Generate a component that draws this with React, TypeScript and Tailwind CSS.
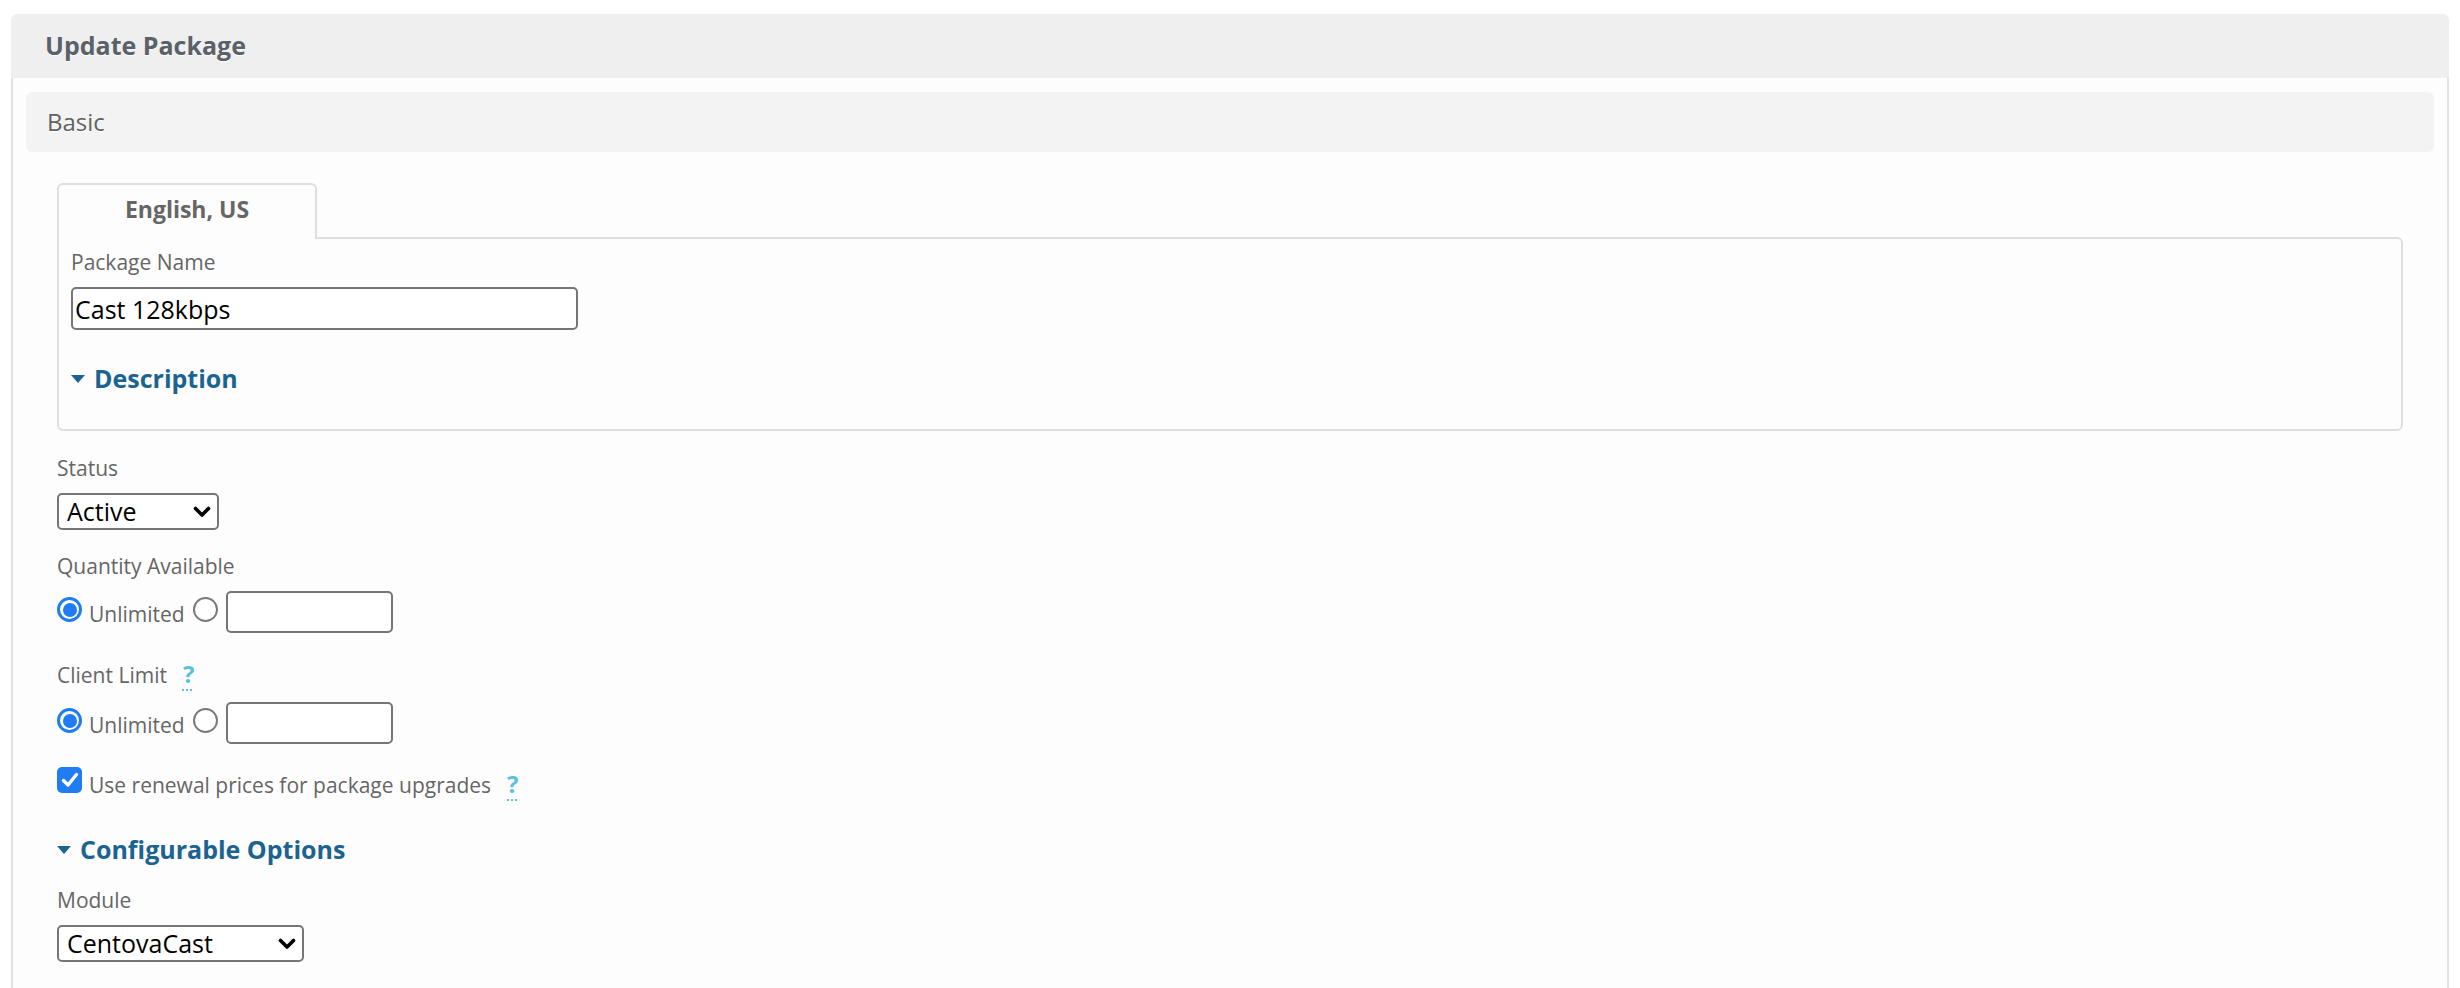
import React from 'react';

// Chevron used by the native-looking selects
function Chevron() {
  return (
    <svg width="18" height="12" viewBox="0 0 18 12" className="pointer-events-none absolute right-[8px] top-1/2 -translate-y-1/2">
      <polyline points="2.5,2.5 9,9 15.5,2.5" fill="none" stroke="#000" strokeWidth="3.6" strokeLinecap="round" strokeLinejoin="round" />
    </svg>
  );
}

function Caret() {
  return (
    <svg width="14" height="8" viewBox="0 0 14 8" className="mt-[2px] shrink-0">
      <polygon points="0,0 14,0 7,8" fill="#1b6391" />
    </svg>
  );
}

function Select({ value, width }: { value: string; width: string }) {
  return (
    <div className={`relative ${width}`}>
      <select
        defaultValue={value}
        className="block h-[37px] w-full appearance-none rounded-[5px] border-2 border-[#767676] bg-white pl-[8px] pr-[30px] text-[25px] leading-none text-black outline-none"
      >
        <option>{value}</option>
      </select>
      <Chevron />
    </div>
  );
}

function Radio({ checked, className = '' }: { checked?: boolean; className?: string }) {
  if (checked) {
    return (
      <span className={`mt-[6px] flex h-[25px] w-[25px] shrink-0 rounded-full border-[3px] border-[#1f7cf3] bg-white p-[2.5px] ${className}`}>
        <span className="flex-1 rounded-full bg-[#1f7cf3]" />
      </span>
    );
  }
  return <span className={`mt-[6px] block h-[25px] w-[25px] shrink-0 rounded-full border-2 border-[#7a7a7a] bg-white ${className}`} />;
}

function Help() {
  return (
    <span className="text-[24px] font-bold text-[#5bc0de] underline decoration-dotted decoration-2 underline-offset-[6px]">?</span>
  );
}

function RadioRow() {
  return (
    <div className="flex items-start">
      <Radio checked />
      <span className="ml-[7px] mt-[8px] text-[21px] leading-[30px] text-[#666]">Unlimited</span>
      <Radio className="ml-[8px]" />
      <input type="text" className="ml-[8px] h-[42px] w-[167px] rounded-[5px] border-2 border-[#767676] bg-white outline-none" />
    </div>
  );
}

export default function App() {
  return (
    <div className="min-h-screen bg-white px-[11px] pt-[14px] font-['Open_Sans','Liberation_Sans',sans-serif]">
      <div className="overflow-hidden rounded-t-[6px]">
        {/* panel header */}
        <div className="flex h-[64px] items-center bg-[#efefef] px-[34px]">
          <h1 className="text-[25px] font-bold text-[#5b6169] [text-shadow:0_1px_0_#fff]">Update Package</h1>
        </div>

        <div className="border-x-2 border-[#e2e2e2] bg-[#fdfdfd] px-[13px] pb-[80px] pt-[14px]">
          <div className="flex h-[60px] items-center rounded-[6px] bg-[#f3f3f3] px-[21px] text-[24px] text-[#616161] [text-shadow:0_1px_0_#fff]">
            Basic
          </div>

          <div className="px-[31px] pt-[31px]">
            {/* language tab */}
            <div className="relative z-10 -mb-[2px] w-[260px] rounded-t-[6px] border-2 border-b-0 border-[#dedede] bg-[#fdfdfd]">
              <div className="h-[54px] text-center text-[23px] font-bold leading-[48px] text-[#666]">English, US</div>
            </div>
            <div className="rounded-b-[6px] rounded-tr-[6px] border-2 border-[#dedede] px-[12px] pb-[33px] pt-[8px]">
              <div className="text-[21px] leading-[30px] text-[#666]">Package Name</div>
              <input
                type="text"
                defaultValue="Cast 128kbps"
                className="mt-[10px] block h-[43px] w-[507px] rounded-[5px] border-2 border-[#767676] bg-white px-[2px] text-[25px] text-black outline-none"
              />
              <div className="mt-[30px] flex items-center">
                <Caret />
                <span className="ml-[9px] text-[25px] font-bold leading-[36px] text-[#1b6391]">Description</span>
              </div>
            </div>

            <div className="mt-[22px] text-[21px] leading-[30px] text-[#666]">Status</div>
            <div className="mt-[10px]">
              <Select value="Active" width="w-[162px]" />
            </div>

            <div className="mt-[21px] text-[21px] leading-[30px] text-[#666]">Quantity Available</div>
            <div className="mt-[10px]">
              <RadioRow />
            </div>

            <div className="mt-[26px] flex items-baseline text-[21px] leading-[30px] text-[#666]">
              <span>Client Limit</span>
              <span className="ml-[16px]">
                <Help />
              </span>
            </div>
            <div className="mt-[12px]">
              <RadioRow />
            </div>

            <div className="mt-[23px] flex items-start">
              <span className="flex h-[26px] w-[25px] shrink-0 items-center justify-center rounded-[5px] bg-[#1f7cf3]">
                <svg width="20" height="18" viewBox="0 0 20 18">
                  <path d="M3.5 9.5 L8 14 L16.5 3.5" fill="none" stroke="#fff" strokeWidth="3.4" strokeLinecap="round" strokeLinejoin="round" />
                </svg>
              </span>
              <span className="ml-[7px] mt-[2px] flex items-baseline text-[21px] leading-[30px] text-[#666]">
                <span>Use renewal prices for package upgrades</span>
                <span className="ml-[16px]">
                  <Help />
                </span>
              </span>
            </div>

            <div className="mt-[31px] flex items-center">
              <Caret />
              <span className="ml-[9px] text-[25px] font-bold leading-[36px] text-[#1b6391]">Configurable Options</span>
            </div>

            <div className="mt-[18px] text-[21px] leading-[30px] text-[#666]">Module</div>
            <div className="mt-[10px]">
              <Select value="CentovaCast" width="w-[247px]" />
            </div>
          </div>
        </div>
      </div>
    </div>
  );
}
